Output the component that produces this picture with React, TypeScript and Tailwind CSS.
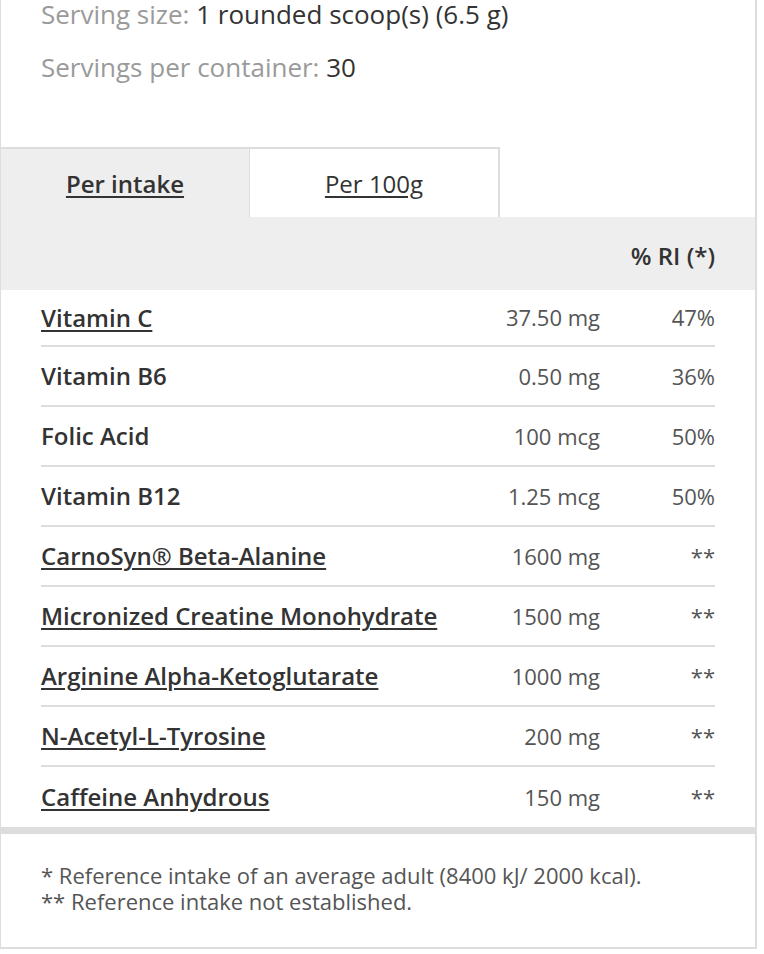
import React from "react";

const rows: { name: string; link: boolean; amount: string; ri: string }[] = [
  { name: "Vitamin C", link: true, amount: "37.50 mg", ri: "47%" },
  { name: "Vitamin B6", link: false, amount: "0.50 mg", ri: "36%" },
  { name: "Folic Acid", link: false, amount: "100 mcg", ri: "50%" },
  { name: "Vitamin B12", link: false, amount: "1.25 mcg", ri: "50%" },
  { name: "CarnoSyn® Beta-Alanine", link: true, amount: "1600 mg", ri: "**" },
  { name: "Micronized Creatine Monohydrate", link: true, amount: "1500 mg", ri: "**" },
  { name: "Arginine Alpha-Ketoglutarate", link: true, amount: "1000 mg", ri: "**" },
  { name: "N-Acetyl-L-Tyrosine", link: true, amount: "200 mg", ri: "**" },
  { name: "Caffeine Anhydrous", link: true, amount: "150 mg", ri: "**" },
];

export default function App() {
  return (
    <div className="w-[764px] h-[954px] bg-white font-['Open_Sans',sans-serif] overflow-hidden">
      <div className="w-[757px] border-l border-r-2 border-b-2 border-[#dddddd]">
        {/* Serving info */}
        <div className="h-[147px] px-[40px] text-[26px] leading-[28px]">
          <p>
            <span className="text-[#9a9a9a]">Serving size: </span>
            <span className="text-[#333333]">1 rounded scoop(s) (6.5 g)</span>
          </p>
          <p className="mt-[25px]">
            <span className="text-[#9a9a9a]">Servings per container: </span>
            <span className="text-[#333333]">30</span>
          </p>
        </div>

        {/* Tabs */}
        <div className="flex h-[70px]">
          <div className="w-[248px] bg-[#eeeeee] border-t-2 border-[#dddddd] flex items-center justify-center pt-[2px]">
            <span className="text-[24px] font-semibold text-[#333333] underline underline-offset-[3px] decoration-[2px]">
              Per intake
            </span>
          </div>
          <div className="w-[251px] bg-white border-t-2 border-l border-r-2 border-[#dddddd] flex items-center justify-center pt-[2px]">
            <span className="text-[24px] text-[#333333] underline underline-offset-[3px] decoration-[2px]">
              Per 100g
            </span>
          </div>
        </div>

        {/* Header */}
        <div className="h-[73px] bg-[#eeeeee] flex items-center justify-end pr-[40px] pt-[4px]">
          <span className="text-[24px] font-semibold text-[#333333]">% RI (*)</span>
        </div>

        {/* Rows */}
        <div className="px-[40px]">
          {rows.map((r, i) => (
            <div
              key={r.name}
              className={
                "flex items-center " +
                (i === 0 ? "h-[57px] " : "h-[60px] ") +
                (i === rows.length - 1 ? "" : "border-b-2 border-[#dddddd]")
              }
            >
              <span
                className={
                  "flex-1 text-[24px] font-semibold text-[#333333] " +
                  (r.link ? "underline underline-offset-[3px] decoration-[2px]" : "")
                }
              >
                {r.name}
              </span>
              <span className="text-[22px] text-[#555555] text-right">{r.amount}</span>
              <span className="w-[115px] text-[22px] text-right text-[#555555]">{r.ri}</span>
            </div>
          ))}
        </div>

        {/* Bar */}
        <div className="h-[7px] bg-[#dddddd]" />

        {/* Footer */}
        <div className="h-[113px] px-[40px] pt-[28px] text-[22px] leading-[26px] text-[#555555]">
          <p>* Reference intake of an average adult (8400 kJ/ 2000 kcal).</p>
          <p>** Reference intake not established.</p>
        </div>
      </div>
    </div>
  );
}
